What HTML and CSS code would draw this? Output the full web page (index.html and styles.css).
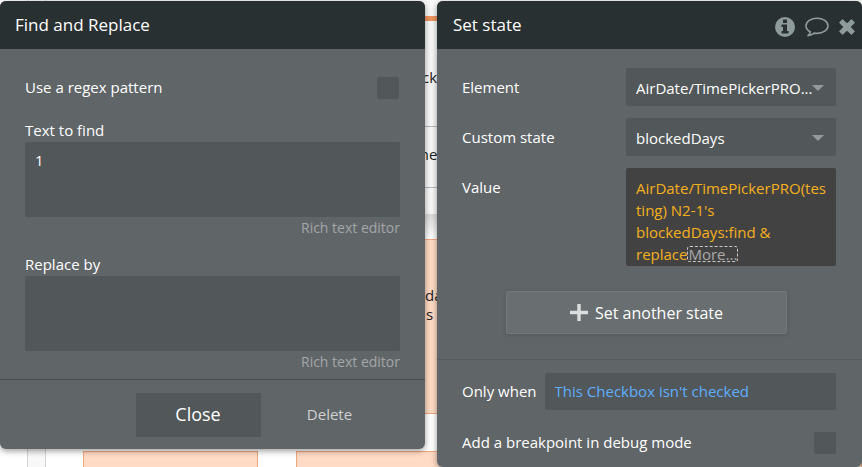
FILE: index.html
```html
<!DOCTYPE html>
<html lang="en">
<head>
    <meta charset="UTF-8">
    <meta name="viewport" content="width=device-width, initial-scale=1.0">
    <title>Set state</title>
    <link rel="stylesheet" href="styles.css">
</head>
<body>
    <!-- Page canvas behind the property editors -->
    <div class="canvas">
        <div class="top-area"></div>
        <div class="orange-bar"></div>
        <div class="row-line first"></div>
        <div class="row-line second"></div>
        <div class="area-shadow"></div>
        <div class="ruler"></div>
        <div class="card card-main"></div>
        <div class="card card-left"></div>
        <div class="card card-right"></div>
        <span class="note note-check">ck</span>
        <span class="note note-time">me</span>
        <span class="note note-day">da</span>
        <span class="note note-days">s</span>
    </div>

    <div class="editors">
        <form class="panel">
            <div class="panel-header">
                <h2>Find and Replace</h2>
            </div>
            <div class="find-body">
                <div class="check-row">
                    <label for="regex">Use a regex pattern</label>
                    <input type="checkbox" id="regex" class="check">
                </div>
                <div class="field">
                    <label for="find">Text to find</label>
                    <textarea id="find" class="text-area">1</textarea>
                    <a href="#" class="rich-link">Rich text editor</a>
                </div>
                <div class="field">
                    <label for="replace">Replace by</label>
                    <textarea id="replace" class="text-area"></textarea>
                    <a href="#" class="rich-link">Rich text editor</a>
                </div>
            </div>
            <div class="panel-footer">
                <button type="button" class="close-button">Close</button>
                <button type="button" class="delete-button">Delete</button>
            </div>
        </form>

        <form class="panel panel-state">
            <div class="panel-header">
                <h2>Set state</h2>
                <div class="icons">
                    <button type="button" class="icon-button" aria-label="Info">
                        <svg width="20" height="20" viewBox="0 0 20 20">
                            <circle cx="10" cy="10" r="10" fill="#8f9a9b"/>
                            <path d="M8 2.500h4v3.500H8zM6.500 7.500H12V14h1.500v2.500h-7V14H8v-4H6.500z" fill="#293032"/>
                        </svg>
                    </button>
                    <button type="button" class="icon-button" aria-label="Comment">
                        <svg width="24" height="20" viewBox="0 0 24 20">
                            <path d="M12 1.200C6 1.200 1 4.500 1 8.800c0 2.600 1.700 4.700 4.300 6-.3 1.600-1.200 2.700-2.300 3.800 2.400-.2 4.500-1 6.100-2.500.9.200 1.900.3 2.900.3 6 0 11-3.300 11-7.600S18 1.200 12 1.200z" fill="none" stroke="#8f9a9b" stroke-width="1.600" stroke-linejoin="round"/>
                        </svg>
                    </button>
                    <button type="button" class="icon-button" aria-label="Close">
                        <svg width="16" height="16" viewBox="0 0 16 16">
                            <path d="M3.600.8L8 5.200 12.400.8l2.800 2.800L10.800 8l4.400 4.400-2.800 2.800L8 10.800l-4.400 4.400-2.800-2.800L5.200 8 .8 3.600z" fill="#8f9a9b" stroke="#8f9a9b" stroke-width="1.200" stroke-linejoin="round"/>
                        </svg>
                    </button>
                </div>
            </div>
            <div class="state-body">
                <div class="state-row">
                    <label for="element">Element</label>
                    <div class="select-box">
                        <select id="element"><option>AirDate/TimePickerPRO...</option></select>
                    </div>
                </div>
                <div class="state-row">
                    <label for="custom">Custom state</label>
                    <div class="select-box">
                        <select id="custom"><option>blockedDays</option></select>
                    </div>
                </div>
                <div class="state-row">
                    <span class="value-label">Value</span>
                    <div class="expression">AirDate/TimePickerPRO(testing) N2-1's<br>blockedDays:find &amp;<br>replace<button type="button" class="more">More...</button></div>
                </div>
                <button type="button" class="add-button">
                    <svg width="18" height="18" viewBox="0 0 18 18">
                        <path d="M9 0v17M0 8.500h18" stroke="#dcdede" stroke-width="3.400"/>
                    </svg>
                    Set another state
                </button>
            </div>
            <div class="condition">
                <div class="when-row">
                    <label for="when">Only when</label>
                    <input type="text" id="when" class="when-input" value="This Checkbox isn't checked">
                </div>
                <div class="check-row">
                    <label for="breakpoint">Add a breakpoint in debug mode</label>
                    <input type="checkbox" id="breakpoint" class="check">
                </div>
            </div>
        </form>
    </div>
</body>
</html>
```

FILE: styles.css
```css
* { box-sizing: border-box; }
body { margin: 0; font-family: "Open Sans", "Noto Sans", sans-serif; font-size: 15px; line-height: 22px; color: #fff; background: #fff; }
button, input, select, textarea { font: inherit; color: inherit; margin: 0; border: 0; border-radius: 0; }
button { background: none; padding: 0; cursor: pointer; }

/* canvas */
.canvas { position: absolute; inset: 0; overflow: hidden; color: #222; }
.canvas > * { position: absolute; }
.top-area { left: 46px; right: 0; top: 0; height: 214px; background: #f8f8f8; }
.orange-bar { left: 46px; right: 0; top: 16px; height: 5px; background: #f0955f; }
.row-line { left: 300px; right: 0; height: 1px; background: #b4babd; }
.row-line.first { top: 126px; }
.row-line.second { top: 187px; }
.area-shadow { left: 46px; right: 0; top: 214px; height: 25px; background: linear-gradient(#d9d9d9, #fff); }
.ruler { left: 27px; top: 0; bottom: 0; width: 19px; background: #f8f8f8; border: solid #d4d4d4; border-width: 0 1px; }
.card { background: #ffdbc5; border: 1px solid #f3a87c; }
.card-main { left: 296px; right: 0; top: 239px; height: 175px; }
.card-left { left: 83px; width: 175px; top: 451px; height: 175px; }
.card-right { left: 296px; right: 0; top: 451px; height: 175px; }
.note-check { left: 422px; top: 66px; }
.note-time { left: 415px; top: 143px; }
.note-day { left: 425px; top: 284px; }
.note-days { left: 426px; top: 303px; }

/* panels */
.editors { position: relative; display: grid; grid-template-columns: 1fr 1fr; gap: 12px; align-items: start; padding-top: 1px; }
.panel { min-width: 0; background: #606568; border-radius: 6px; overflow: hidden; box-shadow: 0 2px 6px rgba(0, 0, 0, 0.4); }
.panel-header { display: flex; align-items: center; justify-content: space-between; height: 48px; padding: 0 7px 0 15px; background: #293032; }
h2 { margin: 0; font-size: 17px; font-weight: 400; line-height: 24px; }
.icons { display: flex; align-items: center; gap: 10px; padding-top: 4px; }
.icon-button svg { display: block; }

.check-row { display: flex; align-items: center; justify-content: space-between; }
.check-row label { line-height: 20px; padding-bottom: 2px; }
.check { appearance: none; width: 22px; height: 22px; background: #525759; border-radius: 2px; }

/* find and replace */
.find-body { padding: 28px 25px 6px; }
.find-body .check-row { margin-bottom: 20px; padding-right: 1px; }
.field { display: flex; flex-direction: column; }
.field label { margin-bottom: 1px; }
.field + .field { margin-top: 14px; }
.text-area { display: block; width: 100%; height: 75px; padding: 7px 10px; background: #525759; border-radius: 2px; resize: none; outline: none; }
.rich-link { align-self: flex-end; font-size: 14px; color: #a3a6a7; text-decoration: none; }
.panel-footer { display: flex; justify-content: center; border-top: 1px solid #484d4f; padding: 13px 0 12px; }
.close-button { width: 125px; height: 44px; margin-left: 92px; padding-bottom: 2px; background: #525759; font-size: 18px; }
.delete-button { width: 104px; margin-left: 17px; padding-bottom: 2px; color: #cfd1d2; }

/* set state */
.panel-state .panel-header { padding-left: 16px; }
.state-body { display: flex; flex-direction: column; gap: 12px; padding: 19px 26px 25px 25px; }
.state-row { display: flex; justify-content: space-between; align-items: center; }
.select-box { position: relative; width: 210px; }
.select-box select { display: block; appearance: none; width: 100%; height: 38px; padding: 2px 10px 0; background: #525759; border-radius: 2px; }
.select-box::after { content: ""; position: absolute; right: 12px; top: 17px; border: 6px solid transparent; border-top-color: #94999b; border-bottom: 0; pointer-events: none; }
.value-label { align-self: flex-start; padding-top: 8px; }
.expression { width: 210px; height: 98px; padding: 9px 8px 0 10px; background: #424242; border-radius: 2px; color: #f5b01e; word-break: break-all; }
.more { border: 1px dashed #c9c9c9; border-radius: 3px; line-height: 14px; color: #a9a9a9; }
.add-button { display: flex; align-items: center; justify-content: center; gap: 7px; align-self: center; width: 281px; height: 43px; margin: 13px 5px 0 0; background: #696e70; border: 1px solid #74797b; border-radius: 2px; box-shadow: 0 1px 4px rgba(0, 0, 0, 0.15); font-size: 16px; }
.condition { border-top: 1px solid #565b5e; padding: 13px 26px 13px 25px; }
.when-row { display: flex; align-items: center; gap: 8px; margin-bottom: 22px; }
.when-row label { padding-bottom: 2px; }
.when-input { flex: 1; min-width: 0; height: 37px; padding: 0 10px 2px; background: #525759; border-radius: 2px; color: #5eaeff; outline: none; }
```
